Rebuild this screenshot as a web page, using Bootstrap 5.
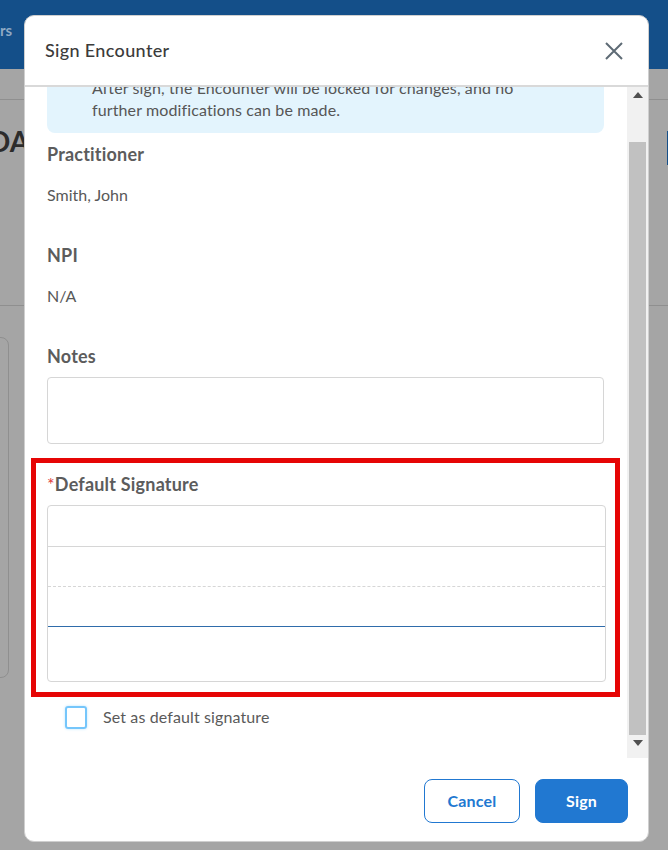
<!DOCTYPE html>
<html lang="en">
<head>
<meta charset="utf-8">
<title>Sign Encounter</title>
<link href="https://cdn.jsdelivr.net/npm/bootstrap@5.3.0/dist/css/bootstrap.min.css" rel="stylesheet">
<style>
html,body{height:850px;overflow:hidden}
body{background:#a5a5a5;font-family:Lato,"Liberation Sans",sans-serif;color:#555;font-size:16px;position:relative}
.pg-top{height:69px;background:#144f89;color:#8fa9c4;font-weight:700;font-size:15px;line-height:61px;padding-left:0}
.pg-strip{height:31px;border-bottom:1px solid #8f8f8f}
.pg-head{height:206px;border-bottom:1px solid #8f8f8f;position:relative;font-size:28px;font-weight:700;color:#2c2c2c;padding-top:24px;line-height:34px}
.pg-head span{display:block;margin-left:-11px}
.pg-tab{position:absolute;right:-4px;top:31px;width:5px;height:34px;background:#144f89}
.pg-cards{padding-top:31px;margin-left:-20px}
.pg-panel{width:29px;height:341px;border:1px solid #8f8f8f;border-radius:8px}
.dlg{position:absolute;left:24px;top:15px;width:625px;height:827px;background:#fff;border:1px solid #cfcfcf;border-radius:10px;overflow:hidden}
.dlg-head{height:71px;border-bottom:2px solid #d9d9d9;padding:0 24px 0 20px}
.dlg-title{font-size:18px;font-weight:500;color:#3b3b3b;letter-spacing:.35px}
.dlg-mid{height:671px}
.dlg-scroll{flex:1;min-width:0;overflow:hidden;padding:0 22px}
.note{margin-top:-10px;width:557px;height:56px;background:#e3f4fd;border-radius:0 0 8px 8px;padding:0 0 0 45px;line-height:22px;position:relative;color:#565656;letter-spacing:.12px;margin-bottom:9px}
.note svg{position:absolute;left:16px;top:-2px}
.fld{font-size:18px;font-weight:700;color:#5c5c5c;line-height:24px;letter-spacing:.2px}
.val{line-height:22px;margin-top:18px;color:#585858;height:39px;margin-bottom:0}
.txa{display:block;width:557px;height:67px;border:1px solid #d6d6d6;border-radius:4px;margin-top:9px}
.ring{margin:14px 0 0 -16px;width:589px;height:239px;border:5px solid #e60505;padding:9px 9px 0 11px}
.req{color:#e03a3a;font-weight:400}
.sigbox{width:559px;height:177px;margin-top:9px;border:1px solid #d6d6d6;border-radius:4px;display:flex;flex-direction:column}
.sig-a{height:40px;border-bottom:1px solid #d6d6d6;box-sizing:content-box}
.sig-b{height:39px;border-bottom:1px dashed #d6d6d6;box-sizing:content-box}
.sig-c{height:39px;border-bottom:1px solid #2f6cab;box-sizing:content-box}
.chkline{padding:8px 0 0 18px;gap:16px;color:#5a5a5a;letter-spacing:.12px}
.chk{width:22px;height:23px;border:2px solid #75c6fb;border-radius:3px;box-shadow:0 0 3px #bde4fd}
.sbar{width:21px;background:#f1f1f1;padding:0 2px 0 2px;flex:none}
.sbar-btn{height:17px}
.sbar-up{height:55px;padding-top:5px}
.sbar-thumb{height:593px;background:#c1c1c1}
.sbar-dn{height:22px;padding-top:5px;margin-top:0}
.sbar svg{display:block;margin:0 auto}
.dlg-foot{padding:21px 20px 0 0;gap:15px}
.btn.act{height:44px;border-radius:8px;font-weight:700;font-size:16px;padding:0;color:#2178d1;border:1px solid #2178d1;background:#fff;width:96px;letter-spacing:.2px;box-shadow:none}
.btn.act.go{background:#2178d1;color:#fff;width:93px}
</style>
</head>
<body>
<div class="pg-top">rs</div>
<div class="pg-strip"></div>
<div class="pg-head"><span>DA</span><i class="pg-tab"></i></div>
<div class="pg-cards"><div class="pg-panel"></div></div>

<div class="dlg d-flex flex-column" role="dialog">
  <div class="dlg-head d-flex align-items-center justify-content-between">
    <div class="dlg-title">Sign Encounter</div>
    <svg width="20" height="20" viewBox="0 0 20 20" fill="none" stroke="#5e6b75" stroke-width="2"><path d="M2 2l16 16M18 2L2 18"/></svg>
  </div>
  <div class="dlg-mid d-flex">
    <div class="dlg-scroll">
      <div class="note">
        <svg width="18" height="12" viewBox="0 0 18 12"><path d="M0 0h3v5h12V0h3v13l-4-3H0z" fill="#2178d1"/></svg>
        After sign, the Encounter will be locked for changes, and no<br>further modifications can be made.
      </div>
      <div class="fld">Practitioner</div>
      <div class="val">Smith, John</div>
      <div class="fld mt-3 pt-1">NPI</div>
      <div class="val">N/A</div>
      <div class="fld mt-3 pt-1">Notes</div>
      <div class="txa"></div>
      <div class="ring">
        <div class="fld"><span class="req">*</span>Default Signature</div>
        <div class="sigbox">
          <div class="sig-a"></div><div class="sig-b"></div><div class="sig-c"></div>
        </div>
      </div>
      <div class="chkline d-flex align-items-center">
        <span class="chk"></span><span>Set as default signature</span>
      </div>
    </div>
    <div class="sbar">
      <div class="sbar-up"><svg width="10" height="6" viewBox="0 0 10 6"><path d="M5 0l5 6H0z" fill="#505050"/></svg></div>
      <div class="sbar-thumb"></div>
      <div class="sbar-dn"><svg width="10" height="6" viewBox="0 0 10 6"><path d="M0 0h10L5 6z" fill="#505050"/></svg></div>
    </div>
  </div>
  <div class="dlg-foot d-flex justify-content-end">
    <button type="button" class="btn act">Cancel</button>
    <button type="button" class="btn act go">Sign</button>
  </div>
</div>
<script src="https://cdn.jsdelivr.net/npm/bootstrap@5.3.0/dist/js/bootstrap.bundle.min.js"></script>
</body>
</html>
